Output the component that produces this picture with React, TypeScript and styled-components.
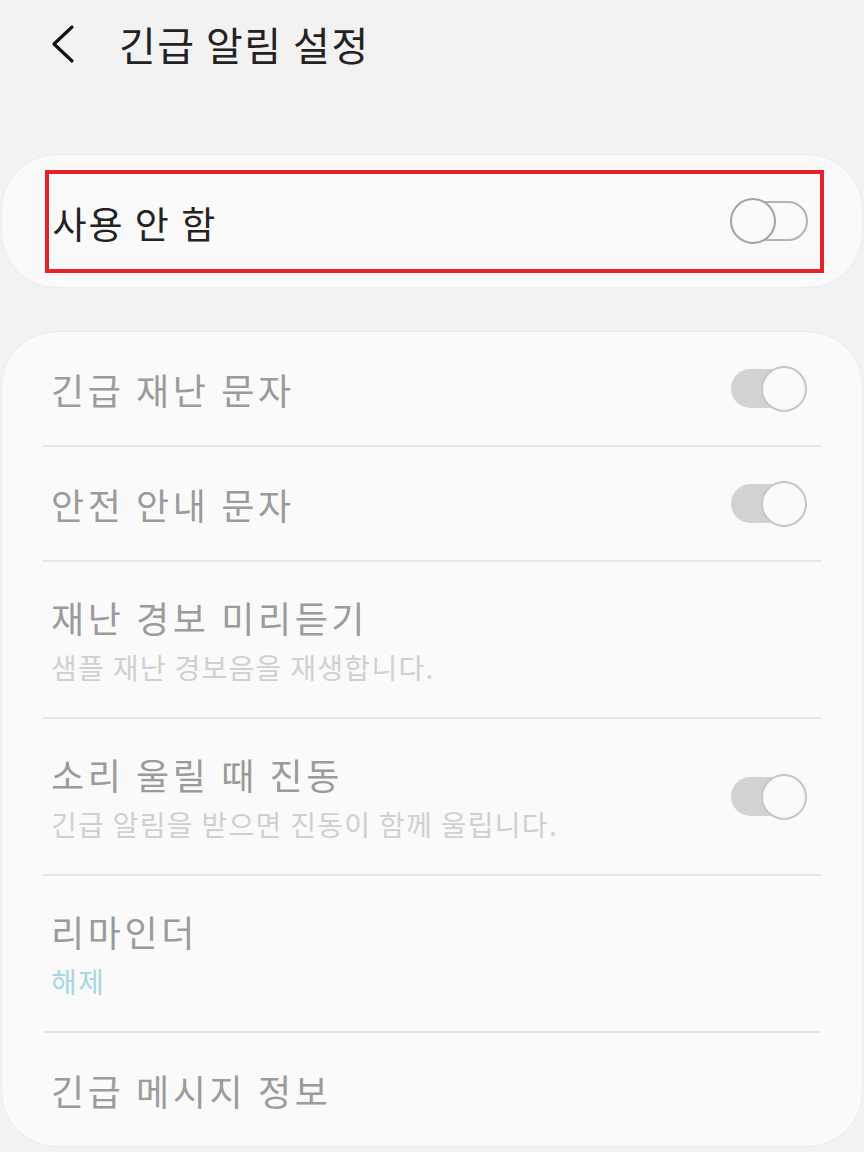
import styled, { createGlobalStyle } from 'styled-components';

const GlobalStyle = createGlobalStyle`
  html, body {
    margin: 0;
    padding: 0;
    background: #f2f2f2;
    font-family: "Noto Sans CJK KR", "Noto Sans", sans-serif;
  }
`;

const Page = styled.div`
  width: 864px;
  min-height: 1152px;
  background: #f2f2f2;
  display: flex;
  flex-direction: column;
`;

const Header = styled.div`
  height: 88px;
  display: flex;
  align-items: center;
  padding-left: 50px;
  gap: 43px;
`;

const BackButton = styled.button`
  border: none;
  background: none;
  padding: 0;
  width: 26px;
  height: 40px;
  display: flex;
  align-items: center;
  cursor: pointer;
`;

const Title = styled.h1`
  margin: 0;
  font-size: 40px;
  font-weight: 400;
  color: #222;
  letter-spacing: 1.5px;
  line-height: 1;
`;

const Card = styled.div<{ $top: number }>`
  margin: ${(p) => p.$top}px 1px 0;
  background: #fafafa;
  border-radius: 56px;
  border: 1px solid #ececec;
`;

const MasterCard = styled(Card)`
  height: 132px;
  display: flex;
  align-items: center;
  justify-content: center;
`;

const Highlight = styled.div`
  box-sizing: border-box;
  width: 779px;
  height: 103px;
  margin-left: 4px;
  border: 4px solid #e8202a;
  display: flex;
  align-items: center;
  justify-content: space-between;
  padding: 0 12px 0 4px;
`;

const MasterLabel = styled.span`
  font-size: 37px;
  color: #222;
  letter-spacing: 2px;
  padding-top: 4px;
`;

const List = styled(Card)`
  padding: 0 41px;
`;

const Row = styled.div<{ $tall?: boolean }>`
  min-height: ${(p) => (p.$tall ? 157 : 115)}px;
  box-sizing: border-box;
  display: flex;
  align-items: center;
  justify-content: space-between;
  padding: 0 14px 0 8px;
  border-bottom: 2px solid #e6e6e6;
  &:last-child {
    border-bottom: none;
    min-height: 113px;
  }
`;

const Texts = styled.div`
  display: flex;
  flex-direction: column;
  gap: 10px;
`;

const RowTitle = styled.span`
  font-size: 36px;
  color: #9b9b9b;
  letter-spacing: 3.6px;
  line-height: 44px;
`;

const RowSub = styled.span<{ $accent?: boolean }>`
  font-size: 28px;
  color: ${(p) => (p.$accent ? '#a7d6e4' : '#d0d0d0')};
  letter-spacing: 1.3px;
  line-height: 36px;
`;

const Switch = styled.div`
  position: relative;
  width: 78px;
  height: 46px;
  flex-shrink: 0;
`;

const Track = styled.div<{ $on?: boolean }>`
  position: absolute;
  top: 3px;
  left: ${(p) => (p.$on ? 2 : 10)}px;
  right: ${(p) => (p.$on ? 10 : 0)}px;
  height: ${(p) => (p.$on ? 39 : 40)}px;
  box-sizing: border-box;
  border-radius: 20px;
  background: ${(p) => (p.$on ? '#d2d2d2' : 'transparent')};
  border: ${(p) => (p.$on ? 'none' : '2px solid #b3b3b3')};
`;

const Knob = styled.div<{ $on?: boolean }>`
  position: absolute;
  top: 0;
  ${(p) => (p.$on ? 'right: 0;' : 'left: 0;')}
  width: 46px;
  height: 46px;
  box-sizing: border-box;
  border-radius: 50%;
  background: #fafafa;
  border: 2px solid ${(p) => (p.$on ? '#c6c6c6' : '#a3a3a3')};
`;

const Toggle = ({ on }: { on?: boolean }) => (
  <Switch>
    <Track $on={on} />
    <Knob $on={on} />
  </Switch>
);

const rows = [
  { title: '긴급 재난 문자', toggle: true },
  { title: '안전 안내 문자', toggle: true },
  { title: '재난 경보 미리듣기', sub: '샘플 재난 경보음을 재생합니다.' },
  { title: '소리 울릴 때 진동', sub: '긴급 알림을 받으면 진동이 함께 울립니다.', toggle: true },
  { title: '리마인더', sub: '해제', accent: true },
  { title: '긴급 메시지 정보' },
];

export default function App() {
  return (
    <Page>
      <GlobalStyle />
      <Header>
        <BackButton aria-label="뒤로">
          <svg width="26" height="40" viewBox="0 0 26 40">
            <polyline
              points="22,3 4,20 22,37"
              fill="none"
              stroke="#111"
              strokeWidth="3.2"
              strokeLinecap="round"
              strokeLinejoin="round"
            />
          </svg>
        </BackButton>
        <Title>긴급 알림 설정</Title>
      </Header>

      <MasterCard $top={66}>
        <Highlight>
          <MasterLabel>사용 안 함</MasterLabel>
          <Toggle />
        </Highlight>
      </MasterCard>

      <List $top={43}>
        {rows.map((r) => (
          <Row key={r.title} $tall={!!r.sub}>
            <Texts>
              <RowTitle>{r.title}</RowTitle>
              {r.sub && <RowSub $accent={r.accent}>{r.sub}</RowSub>}
            </Texts>
            {r.toggle && <Toggle on />}
          </Row>
        ))}
      </List>
    </Page>
  );
}
